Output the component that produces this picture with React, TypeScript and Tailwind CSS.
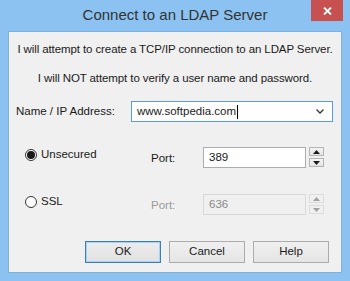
import React from 'react';

const font = { fontFamily: '"Liberation Sans", Arial, sans-serif' };

function Spin({ disabled }: { disabled?: boolean }) {
  const tri = disabled ? '#a0a0a0' : '#1a1a1a';
  const box = disabled
    ? 'border-[#dcdcdc] bg-[#f0f0f0]'
    : 'border-[#b4b4b4] bg-gradient-to-b from-[#f4f4f4] to-[#e4e4e4]';
  return (
    <div className="flex flex-col gap-[2px] ml-[3px] -mt-[1px]">
      <div className={`w-[15px] h-[9px] border flex items-center justify-center ${box}`}>
        <svg width="7" height="4" viewBox="0 0 7 4"><path d="M0 4 L3.5 0 L7 4 Z" fill={tri} /></svg>
      </div>
      <div className={`w-[15px] h-[9px] border flex items-center justify-center ${box}`}>
        <svg width="7" height="4" viewBox="0 0 7 4"><path d="M0 0 L7 0 L3.5 4 Z" fill={tri} /></svg>
      </div>
    </div>
  );
}

function Radio({ checked, label }: { checked?: boolean; label: string }) {
  return (
    <div className="w-[142px] pl-[16px] flex items-center gap-[4px] -mt-[6px]">
      <div className="w-[12px] h-[12px] rounded-full border border-[#333] bg-white flex items-center justify-center">
        {checked && <div className="w-[8px] h-[8px] rounded-full bg-[#1a1a1a]" />}
      </div>
      <span className="text-[11.5px] text-[#1a1a1a]">{label}</span>
    </div>
  );
}

export default function App() {
  return (
    <div className="w-[350px] h-[281px] bg-[#8bc2f1] flex flex-col overflow-hidden" style={font}>
      {/* title bar */}
      <div className="relative h-[31px] flex items-center justify-center">
        <span className="text-[15px] text-[#333] -mt-[1px]">Connect to an LDAP Server</span>
        <div className="absolute top-0 right-[7px] w-[32px] h-[21px] bg-[#c75050] flex items-center justify-center">
          <svg width="9" height="8" viewBox="0 0 9 8">
            <path d="M1 0.5 L8 7.5 M8 0.5 L1 7.5" stroke="#fff" strokeWidth="1.8" />
          </svg>
        </div>
      </div>

      {/* client area */}
      <div className="mx-[8px] h-[242px] bg-[#f0f0f0] border border-[#7fb0dc] flex flex-col text-[#1a1a1a]">
        <p className="mt-[9px] h-[16px] leading-[16px] text-[11.5px] text-center tracking-[-0.1px]">
          I will attempt to create a TCP/IP connection to an LDAP Server.
        </p>
        <p className="mt-[13px] h-[16px] leading-[16px] text-[11.5px] text-center tracking-[-0.1px]">
          I will NOT attempt to verify a user name and password.
        </p>

        <div className="mt-[15px] flex items-center h-[21px]">
          <span className="w-[122px] pl-[7px] text-[11.5px]">Name / IP Address:</span>
          <div className="w-[202px] h-[21px] bg-white border border-[#569de5] flex items-center pl-[5px] pr-[8px]">
            <span className="text-[11.5px] flex-1 flex items-center">
              www.softpedia.com
              <span className="inline-block w-[1px] h-[14px] bg-black ml-[1px]" />
            </span>
            <svg width="8" height="5" viewBox="0 0 8 5">
              <path d="M0.5 0.5 L4 4 L7.5 0.5" stroke="#333" strokeWidth="1.3" fill="none" />
            </svg>
          </div>
        </div>

        <div className="mt-[25px] flex items-center h-[21px]">
          <Radio checked label="Unsecured" />
          <span className="w-[52px] text-[11.5px] mt-[2px]">Port:</span>
          <div className="w-[103px] h-[21px] bg-white border border-[#abadb3] flex items-center pl-[5px] text-[11.5px]">389</div>
          <Spin />
        </div>

        <div className="mt-[26px] flex items-center h-[21px]">
          <Radio label="SSL" />
          <span className="w-[52px] text-[11.5px] mt-[2px] text-[#9a9a9a]">Port:</span>
          <div className="w-[103px] h-[21px] bg-[#f0f0f0] border border-[#d9d9d9] flex items-center pl-[5px] text-[11.5px] text-[#8a8a8a]">636</div>
          <Spin disabled />
        </div>

        <div className="mt-[26px] flex gap-[8px] pl-[76px]">
          <button className="w-[76px] h-[22px] border border-[#3c7fb1] bg-gradient-to-b from-[#ececec] to-[#e1e1e1] text-[11.5px] outline outline-1 outline-[#a8d2f5] -outline-offset-2">OK</button>
          <button className="w-[76px] h-[22px] border border-[#acacac] bg-gradient-to-b from-[#f0f0f0] to-[#e5e5e5] text-[11.5px]">Cancel</button>
          <button className="w-[76px] h-[22px] border border-[#acacac] bg-gradient-to-b from-[#f0f0f0] to-[#e5e5e5] text-[11.5px]">Help</button>
        </div>
      </div>
    </div>
  );
}
